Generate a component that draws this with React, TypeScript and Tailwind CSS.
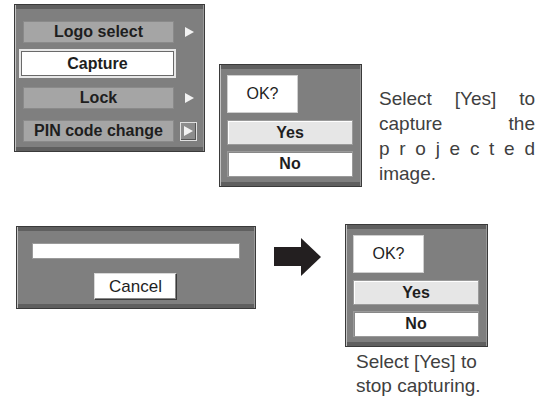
import React from 'react'

const panel =
  'border border-[#3a3a3a] bg-[#7f7f7f] shadow-[inset_1px_0_0_#c4c4c4,inset_-1px_0_0_#9a9a9a,inset_0_4px_0_#5f5f5f,inset_0_-4px_0_#5f5f5f]'

function Arrow() {
  return (
    <svg width="9" height="10" viewBox="0 0 9 10" className="block">
      <polygon points="0,0 9,5 0,10" fill="#f2f2f2" />
    </svg>
  )
}

function MenuRow({ label, arrow, boxed }: { label: string; arrow?: boolean; boxed?: boolean }) {
  return (
    <div className="flex h-[22px] items-center pl-[8px]">
      <div className="flex h-[22px] w-[151px] items-center justify-center border border-[#8a8a8a] bg-[#a5a5a5] text-[16px] font-bold text-[#1e1e1e]">
        {label}
      </div>
      {arrow ? (
        <div className="ml-[11px]">
          <Arrow />
        </div>
      ) : null}
      {boxed ? (
        <div className="ml-[6px] flex h-[19px] w-[17px] items-center justify-center border border-[#e0e0e0] bg-[#8c8c8c] shadow-[inset_-1px_-1px_0_#555]">
          <Arrow />
        </div>
      ) : null}
    </div>
  )
}

function Confirm() {
  return (
    <div className={`${panel} h-[123px] w-[143px] pl-[7px] pt-[10px]`}>
      <div className="flex h-[38px] w-[71px] items-center justify-center border border-[#cfcfcf] bg-white text-[16px] text-[#1e1e1e]">
        OK?
      </div>
      <div className="mt-[7px] flex h-[25px] w-[126px] items-center justify-center border border-[#9a9a9a] bg-[#e6e6e6] text-[16px] font-bold text-[#1e1e1e] shadow-[inset_1px_1px_0_#ffffff]">
        Yes
      </div>
      <div className="mt-[6px] flex h-[26px] w-[126px] items-center justify-center border border-[#9a9a9a] bg-white text-[16px] font-bold text-[#1e1e1e] shadow-[inset_1px_1px_0_#888]">
        No
      </div>
    </div>
  )
}

export default function App() {
  return (
    <div className="relative h-[410px] w-[540px] overflow-hidden bg-white font-['Liberation_Sans',Arial,sans-serif]">
      {/* top row */}
      <div className="flex h-[187px] items-start">
        <div className={`${panel} ml-[14px] mt-[4px] h-[148px] w-[191px] pt-[16px]`}>
          <MenuRow label="Logo select" arrow />
          <div className="mt-[6px] pl-[4px]">
            <div className="flex h-[29px] w-[157px] items-center justify-center border-2 border-[#e8e8e8] bg-white text-[16px] font-bold text-[#1e1e1e] shadow-[inset_0_0_0_1px_#6a6a6a]">
              Capture
            </div>
          </div>
          <div className="mt-[9px]">
            <MenuRow label="Lock" arrow />
          </div>
          <div className="mt-[11px]">
            <MenuRow label="PIN code change" boxed />
          </div>
        </div>

        <div className="ml-[14px] mt-[64px]">
          <Confirm />
        </div>

        <div className="ml-[17px] mt-[86px] w-[156px] text-[19px] leading-[25px] text-[#404040]">
          <div className="flex justify-between">
            <span>Select</span>
            <span>[Yes]</span>
            <span>to</span>
          </div>
          <div className="flex justify-between">
            <span>capture</span>
            <span>the</span>
          </div>
          <div className="flex justify-between">
            {'projected'.split('').map((c, i) => (
              <span key={i}>{c}</span>
            ))}
          </div>
          <div>image.</div>
        </div>
      </div>

      {/* bottom row */}
      <div className="mt-[37px] flex items-start">
        <div className={`${panel} ml-[16px] mt-[2px] h-[83px] w-[240px] pl-[15px] pt-[16px]`}>
          <div className="h-[16px] w-[208px] border border-[#9a9a9a] bg-white" />
          <div className="mt-[14px] flex justify-center pr-[16px]">
            <div className="flex h-[27px] w-[83px] items-center justify-center border border-[#d8d8d8] border-b-[#3a3a3a] border-r-[#3a3a3a] bg-white text-[17px] text-[#1e1e1e] shadow-[inset_-1px_-1px_0_#888]">
              Cancel
            </div>
          </div>
        </div>

        <svg width="48" height="38" viewBox="0 0 48 38" className="ml-[18px] mt-[14px] block">
          <rect x="0" y="9" width="28" height="19" fill="#231f20" />
          <polygon points="27,0 47,19 27,38" fill="#231f20" />
        </svg>

        <div className="ml-[23px] flex flex-col">
          <Confirm />
          <div className="ml-[11px] mt-[3px] text-[19px] leading-[24px] text-[#404040]">
            <div>Select [Yes] to</div>
            <div>stop capturing.</div>
          </div>
        </div>
      </div>
    </div>
  )
}
